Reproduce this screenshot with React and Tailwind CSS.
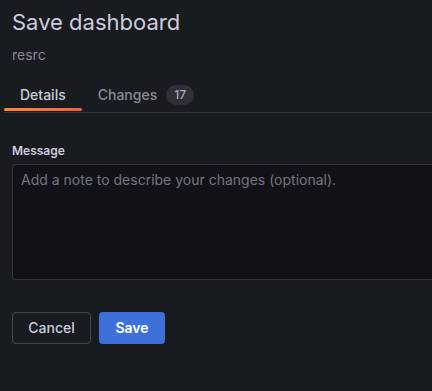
import React from 'react';

const App = () => {
  return (
    <div className="h-[391px] w-full overflow-hidden bg-[#181b1f] text-[#ccccdc] font-['Inter',sans-serif]">
      <div className="pl-3 pt-[8px]">
        <h1 className="text-[22px] leading-[28px] font-normal">Save dashboard</h1>
        <div className="mt-[9px] text-sm leading-5 text-[#ccccdc]/65">resrc</div>
      </div>

      <div className="ml-1 mt-[16px] flex border-b border-[#ccccdc]/15">
        <div className="relative flex h-[31px] items-center px-4 pb-1 text-sm font-medium text-[#ccccdc]">
          Details
          <span className="absolute bottom-[1px] left-0 right-0 h-[3px] rounded-sm bg-gradient-to-r from-[#ff8833] to-[#f55f3e]"></span>
        </div>
        <div className="flex h-[31px] items-center gap-[9px] px-4 pb-1 text-sm font-medium text-[#ccccdc]/65">
          Changes
          <span className="rounded-full bg-[#2e3036] px-[8px] py-[1px] text-xs leading-[18px] text-[#ccccdc]/80">17</span>
        </div>
      </div>

      <div className="pl-3 pt-[29px]">
        <label className="block text-xs font-semibold leading-[18px] text-[#ccccdc]">Message</label>
        <div className="mt-[4px] h-[116px] w-[440px] rounded-sm border border-[#ccccdc]/20 bg-[#111217] px-2 pt-[4px] text-sm leading-[22px] text-[#ccccdc]/55">
          Add a note to describe your changes (optional).
        </div>

        <div className="mt-[32px] flex gap-2">
          <button className="h-[32px] w-[79px] rounded-sm border border-[#ccccdc]/25 text-sm font-medium text-[#ccccdc]">
            Cancel
          </button>
          <button className="h-[32px] w-[66px] rounded-sm bg-[#3d71d9] text-sm font-semibold text-white">
            Save
          </button>
        </div>
      </div>
    </div>
  );
};

export default App;
